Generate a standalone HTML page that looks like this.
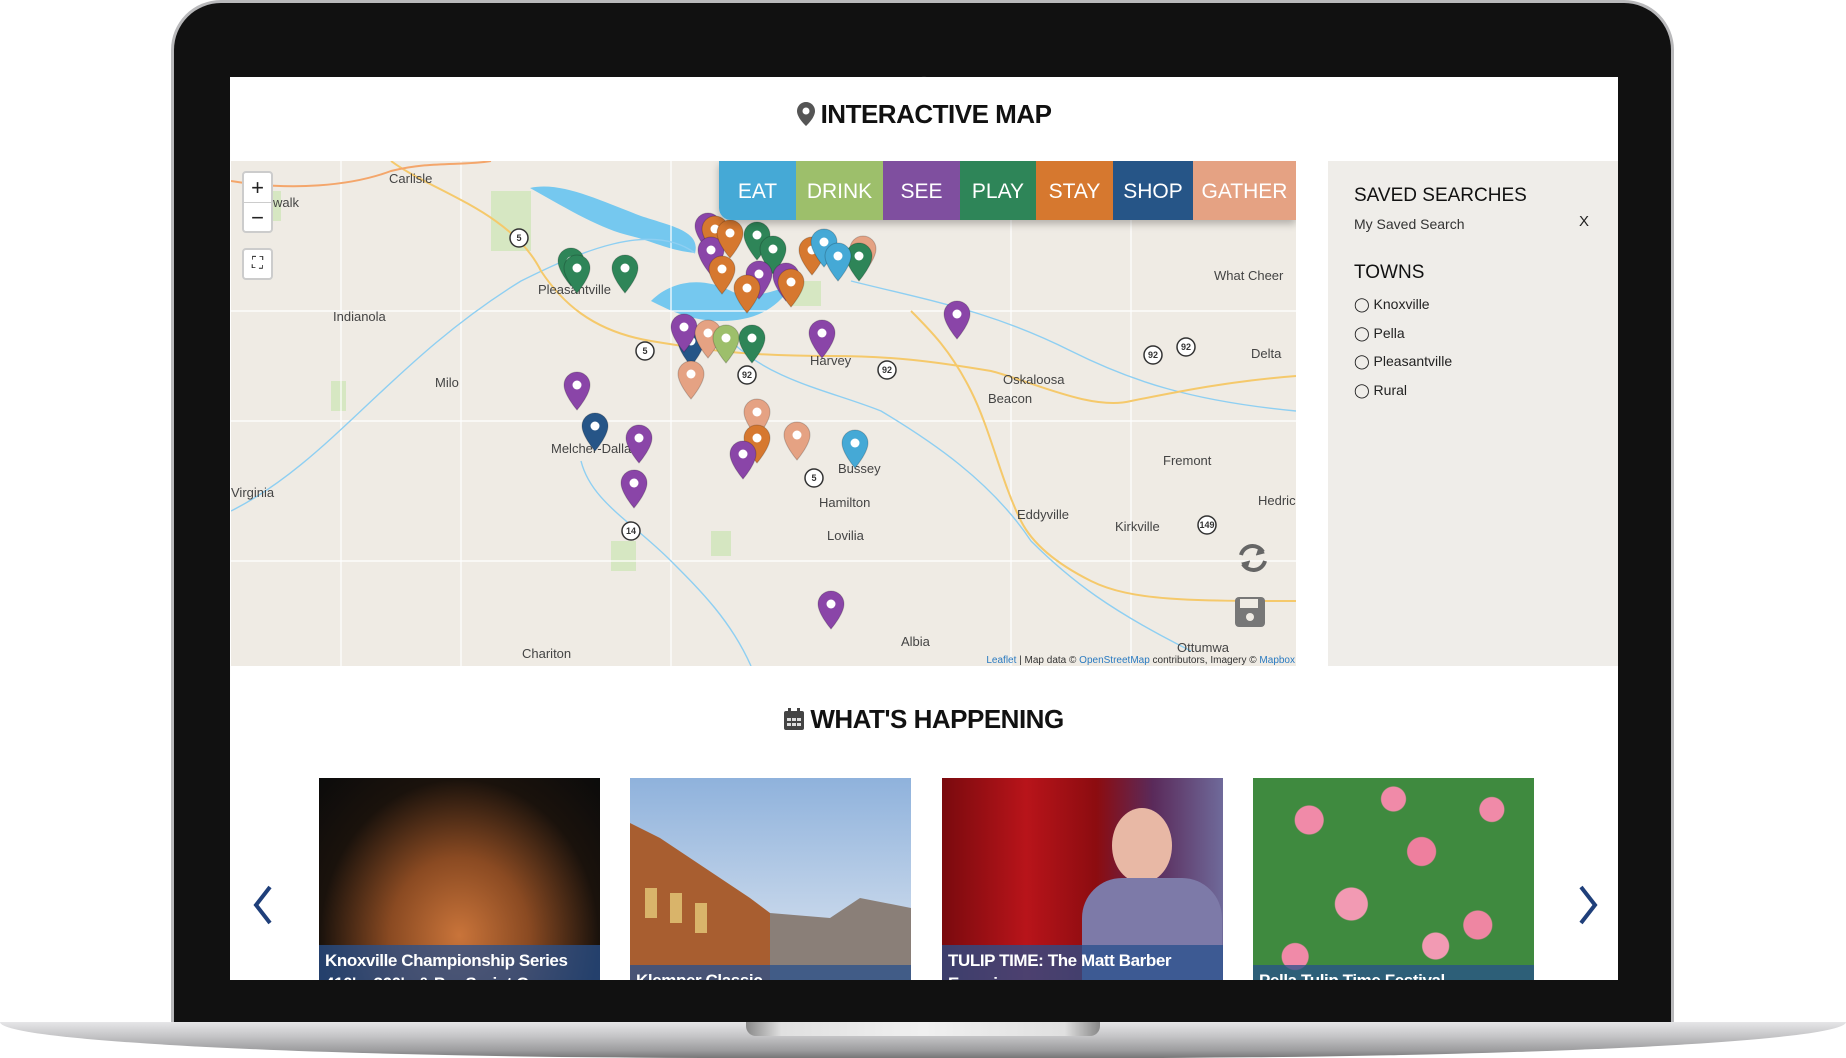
<!DOCTYPE html>
<html><head><meta charset="utf-8"><style>
*{margin:0;padding:0;box-sizing:border-box}
body{width:1846px;height:1058px;background:#fff;position:relative;overflow:hidden;font-family:"Liberation Sans",sans-serif}
.abs{position:absolute}
.body{left:171px;top:0;width:1503px;height:1030px;background:#111;border-radius:50px 50px 0 0;border:3px solid #b9b9bb;border-bottom:none}
.screen{left:230px;top:77px;width:1388px;height:903px;background:#fff;overflow:hidden}
.base{left:0;top:1022px;width:1846px;height:36px;background:linear-gradient(#e6e6e8,#c4c4c6 40%,#9b9b9d 80%,#777 100%);border-radius:0 0 40% 40%/0 0 100% 100%}
.notch{left:746px;top:1022px;width:354px;height:14px;background:linear-gradient(90deg,#888,#e0e0e0 10%,#f0f0f0 50%,#e0e0e0 90%,#888);border-radius:0 0 10px 10px}
.h{font-weight:bold;color:#111;font-size:26px;letter-spacing:-0.5px;text-align:center;width:100%}
.tab{position:absolute;top:0;height:59px;color:#fff;font-size:21px;line-height:62px;text-align:center}
.side{left:1098px;top:84px;width:290px;height:505px;background:#efede9}
.card{position:absolute;top:701px;width:281px;height:210px;overflow:hidden}
.cap{position:absolute;left:0;width:100%;background:rgba(40,80,140,0.75);color:#fff;font-weight:bold;font-size:17px;padding:4px 6px;line-height:23px;letter-spacing:-0.4px}
.zb{position:absolute;left:11px;width:31px;background:#fff;border:2px solid #ccc;border-radius:4px;text-align:center;color:#222}
</style></head><body>
<div class="abs body"></div>
<div class="abs" style="left:920px;top:76px;width:8px;height:8px;border-radius:50%;background:#222"></div>
<div class="abs screen">
  <div class="abs h" style="top:22px"><svg width="18" height="24" viewBox="0 0 18 24" style="vertical-align:-3px;margin-right:6px"><path d="M9 0C4 0 0 4 0 9c0 7 9 15 9 15s9-8 9-15C18 4 14 0 9 0z" fill="#555"/><circle cx="9" cy="9" r="3.5" fill="#fff"/></svg>INTERACTIVE MAP</div>
  <div class="abs" style="left:1px;top:84px;width:1065px;height:505px;background:#efebe4;overflow:hidden">
    <svg class="abs" style="left:0;top:0" width="1065" height="505" viewBox="0 0 1065 505" font-family="Liberation Sans" font-size="12" fill="#555">
      <g fill="#cfe6b9" opacity=".8"><rect x="260" y="30" width="40" height="60"/><rect x="560" y="120" width="30" height="25"/><rect x="30" y="30" width="20" height="30"/><rect x="380" y="380" width="25" height="30"/><rect x="480" y="370" width="20" height="25"/><rect x="100" y="220" width="15" height="30"/></g>
      <path d="M299 27 C330 20 370 40 410 55 C440 65 470 70 464 92 C440 90 420 80 400 75 C370 68 340 50 299 27z" fill="#75c8ef"/>
      <path d="M420 140 C440 120 470 115 500 130 C520 140 540 130 560 125 C545 150 520 160 490 160 C460 160 440 150 420 140z" fill="#75c8ef"/>
      <g fill="none" stroke="#fff" stroke-width="1.2"><path d="M0 150 L1065 150"/><path d="M0 260 L1065 260"/><path d="M0 400 L1065 400"/><path d="M110 0 V505"/><path d="M230 0 V505"/><path d="M440 0 V505"/><path d="M780 0 V505"/><path d="M900 0 V505"/></g>
      <g fill="none" stroke="#8ecff2" stroke-width="1.4"><path d="M0 350 C100 300 160 200 290 120 C350 90 420 60 464 92"/><path d="M500 180 C540 220 600 230 650 250 C700 280 760 320 800 380 C840 420 880 450 960 490"/><path d="M350 300 C360 340 400 360 440 400 C470 430 500 460 520 505"/><path d="M620 120 C700 140 760 150 840 190 C900 220 960 240 1065 250"/></g>
      <g fill="none" stroke="#f5c96b" stroke-width="2"><path d="M160 0 C200 30 280 50 310 110 C330 140 360 170 420 180 C480 190 520 195 600 195 C660 195 700 200 760 210 C800 220 860 250 900 240 C950 230 1000 220 1065 215"/><path d="M680 150 C700 170 720 190 740 230 C760 270 770 320 790 360 C800 380 820 400 860 420 C900 440 960 440 1065 440"/></g>
      <g fill="none" stroke="#f4a66b" stroke-width="2"><path d="M0 20 C60 30 120 25 160 10 C200 0 230 5 260 0"/></g>
      <g font-size="13" fill="#444">
        <text x="158" y="22">Carlisle</text><text x="42" y="46">walk</text><text x="102" y="160">Indianola</text><text x="204" y="226">Milo</text><text x="307" y="133">Pleasantville</text><text x="320" y="292">Melcher-Dallas</text><text x="0" y="336">Virginia</text><text x="291" y="497">Chariton</text><text x="579" y="204">Harvey</text><text x="772" y="223">Oskaloosa</text><text x="757" y="242">Beacon</text><text x="983" y="119">What Cheer</text><text x="1020" y="197">Delta</text><text x="932" y="304">Fremont</text><text x="1027" y="344">Hedric</text><text x="884" y="370">Kirkville</text><text x="786" y="358">Eddyville</text><text x="588" y="346">Hamilton</text><text x="596" y="379">Lovilia</text><text x="607" y="312">Bussey</text><text x="670" y="485">Albia</text><text x="946" y="491">Ottumwa</text>
      </g>
      <g font-size="9" font-weight="bold" text-anchor="middle">
        <g fill="#fff" stroke="#333" stroke-width="1.5"><circle cx="288" cy="77" r="9"/><circle cx="414" cy="190" r="9"/><circle cx="516" cy="214" r="9"/><circle cx="656" cy="209" r="9"/><circle cx="955" cy="186" r="9"/><circle cx="922" cy="194" r="9"/><circle cx="583" cy="317" r="9"/><circle cx="400" cy="370" r="9"/><circle cx="976" cy="364" r="9"/></g>
        <g fill="#333"><text x="288" y="80">5</text><text x="414" y="193">5</text><text x="516" y="217">92</text><text x="656" y="212">92</text><text x="955" y="189">92</text><text x="922" y="197">92</text><text x="583" y="320">5</text><text x="400" y="373">14</text><text x="976" y="367">149</text></g>
      </g>
      <g id="pins"></g>
      <text x="1064" y="502" text-anchor="end" font-size="10" fill="#333"><tspan fill="#2a7ac0">Leaflet</tspan> | Map data © <tspan fill="#2a7ac0">OpenStreetMap</tspan> contributors, Imagery © <tspan fill="#2a7ac0">Mapbox</tspan></text>
      <g transform="translate(1022,397)" fill="none" stroke="#666" stroke-width="4"><path d="M-12 -3 A12 12 0 0 1 10 -6"/><path d="M12 3 A12 12 0 0 1 -10 6"/><path d="M6 -12 L11 -5 L3 -3" fill="#666" stroke-width="1"/><path d="M-6 12 L-11 5 L-3 3" fill="#666" stroke-width="1"/></g>
      <g transform="translate(1004,436)"><rect width="30" height="30" rx="4" fill="#777"/><rect x="5" y="2" width="18" height="9" fill="#efebe4"/><circle cx="15" cy="20" r="4" fill="#efebe4"/></g>
    </svg>
    <div class="zb" style="top:10px;height:62px;font-size:22px;line-height:29px">+<br><span style="display:block;border-top:1px solid #ccc">−</span></div>
    <div class="zb" style="top:87px;height:32px;font-size:16px;line-height:28px">⛶</div>
    <div class="abs" style="left:488px;top:0;height:59px;width:577px;border-radius:0 0 0 12px;overflow:hidden;box-shadow:0 4px 8px rgba(0,0,0,.25)">
      <div class="tab" style="left:0;width:77px;background:#45a9d6">EAT</div>
      <div class="tab" style="left:77px;width:87px;background:#9dbf6b">DRINK</div>
      <div class="tab" style="left:164px;width:77px;background:#7f4f9f">SEE</div>
      <div class="tab" style="left:241px;width:76px;background:#2e8558">PLAY</div>
      <div class="tab" style="left:317px;width:77px;background:#d6782f">STAY</div>
      <div class="tab" style="left:394px;width:80px;background:#265587">SHOP</div>
      <div class="tab" style="left:474px;width:103px;background:#e5a283">GATHER</div>
    </div>
  </div>
  <div class="abs side">
    <div class="abs" style="left:26px;top:24px;font-size:19px;color:#111">SAVED SEARCHES</div>
    <div class="abs" style="left:26px;top:55px;font-size:14px;color:#333">My Saved Search</div>
    <div class="abs" style="left:251px;top:52px;font-size:15px;color:#222">X</div>
    <div class="abs" style="left:26px;top:101px;font-size:19px;color:#111">TOWNS</div>
    <div class="abs" style="left:26px;top:129px;font-size:14px;color:#222;line-height:28.5px">
      <div>◯ Knoxville</div><div>◯ Pella</div><div>◯ Pleasantville</div><div>◯ Rural</div>
    </div>
  </div>
  <div class="abs h" style="top:627px"><svg width="20" height="22" viewBox="0 0 20 22" style="vertical-align:-2px;margin-right:6px"><rect x="0" y="3" width="20" height="19" rx="2" fill="#444"/><rect x="4" y="0" width="3" height="6" fill="#444"/><rect x="13" y="0" width="3" height="6" fill="#444"/><g fill="#ddd"><rect x="3" y="10" width="4" height="3"/><rect x="8" y="10" width="4" height="3"/><rect x="13" y="10" width="4" height="3"/><rect x="3" y="15" width="4" height="3"/><rect x="8" y="15" width="4" height="3"/><rect x="13" y="15" width="4" height="3"/></g></svg>WHAT'S HAPPENING</div>
  <svg class="abs" style="left:22px;top:808px" width="22" height="40" viewBox="0 0 22 40"><path d="M18 2 L4 20 L18 38" fill="none" stroke="#1f3f7a" stroke-width="4"/></svg>
  <svg class="abs" style="left:1347px;top:808px" width="22" height="40" viewBox="0 0 22 40"><path d="M4 2 L18 20 L4 38" fill="none" stroke="#1f3f7a" stroke-width="4"/></svg>
  <div class="card" style="left:89px;background:radial-gradient(ellipse at 50% 75%,#c9743a 0%,#8a4a22 35%,#1a120c 70%,#0b0b0b 100%)"><div class="cap" style="top:167px">Knoxville Championship Series 410's, 360's &amp; Pro Sprint Cars</div></div>
  <div class="card" style="left:400px;background:linear-gradient(180deg,#8fb2dc,#dfe7f1)"><svg class="abs" style="left:0;top:0" width="281" height="210" viewBox="0 0 281 210"><path d="M0 45 L30 60 L120 120 L140 135 L140 210 L0 210z" fill="#a85e30"/><path d="M140 135 L200 140 L230 120 L281 130 L281 210 L140 210z" fill="#8a7f78"/><g fill="#d9b46a"><rect x="15" y="110" width="12" height="30"/><rect x="40" y="115" width="12" height="30"/><rect x="65" y="125" width="12" height="30"/></g></svg><div class="cap" style="top:187px">Klemper Classic</div></div>
  <div class="card" style="left:712px;background:linear-gradient(90deg,#7a0a0e,#b8141a 30%,#8c0c10 55%,#5a2a5a 75%,#6f6a9a 100%)"><div class="abs" style="left:170px;top:30px;width:60px;height:75px;border-radius:50%;background:#e8b8a5"></div><div class="abs" style="left:140px;top:100px;width:140px;height:110px;border-radius:40px 40px 0 0;background:#7d7aa8"></div><div class="cap" style="top:167px">TULIP TIME: The Matt Barber Experience</div></div>
  <div class="card" style="left:1023px;background:radial-gradient(circle at 20% 20%,#f08aa8 0 14px,transparent 15px),radial-gradient(circle at 60% 35%,#ee7f9e 0 14px,transparent 15px),radial-gradient(circle at 35% 60%,#f29ab3 0 16px,transparent 17px),radial-gradient(circle at 80% 70%,#ee86a2 0 14px,transparent 15px),radial-gradient(circle at 15% 85%,#f08aa8 0 13px,transparent 14px),radial-gradient(circle at 85% 15%,#f08aa8 0 12px,transparent 13px),radial-gradient(circle at 50% 10%,#f08aa8 0 12px,transparent 13px),radial-gradient(circle at 65% 80%,#f29ab3 0 13px,transparent 14px),#3f8a3f"><div class="cap" style="top:187px">Pella Tulip Time Festival</div></div>
</div>
<div class="abs base"></div>
<div class="abs notch"></div>
<script>
var P=[[340,100,'#2e8558'],[346,107,'#2e8558'],[394,107,'#2e8558'],[346,224,'#8a45a8'],[364,265,'#265587'],[408,277,'#8a45a8'],[403,322,'#8a45a8'],[460,180,'#265587'],[453,166,'#8a45a8'],[477,172,'#e5a283'],[495,177,'#9dbf6b'],[521,177,'#2e8558'],[460,213,'#e5a283'],[591,172,'#8a45a8'],[726,153,'#8a45a8'],[526,251,'#e5a283'],[526,277,'#d6782f'],[512,293,'#8a45a8'],[566,274,'#e5a283'],[624,282,'#45a9d6'],[600,443,'#8a45a8'],[477,65,'#8a45a8'],[484,68,'#d6782f'],[480,89,'#8a45a8'],[499,72,'#d6782f'],[526,74,'#2e8558'],[542,88,'#2e8558'],[491,108,'#d6782f'],[528,113,'#8a45a8'],[516,127,'#d6782f'],[555,115,'#8a45a8'],[560,121,'#d6782f'],[581,89,'#d6782f'],[593,81,'#45a9d6'],[632,88,'#e5a283'],[628,95,'#2e8558'],[607,95,'#45a9d6']];
var g=document.getElementById('pins'),s='';
P.forEach(function(p){s+='<g transform="translate('+(p[0]-13)+','+(p[1]-13)+')"><path d="M13 0C5.8 0 0 5.8 0 13c0 10 13 25 13 25s13-15 13-25C26 5.8 20.2 0 13 0z" fill="'+p[2]+'" stroke="rgba(0,0,0,.2)"/><circle cx="13" cy="13" r="4.5" fill="#fff"/></g>';});
g.innerHTML=s;
</script>
</body></html>
